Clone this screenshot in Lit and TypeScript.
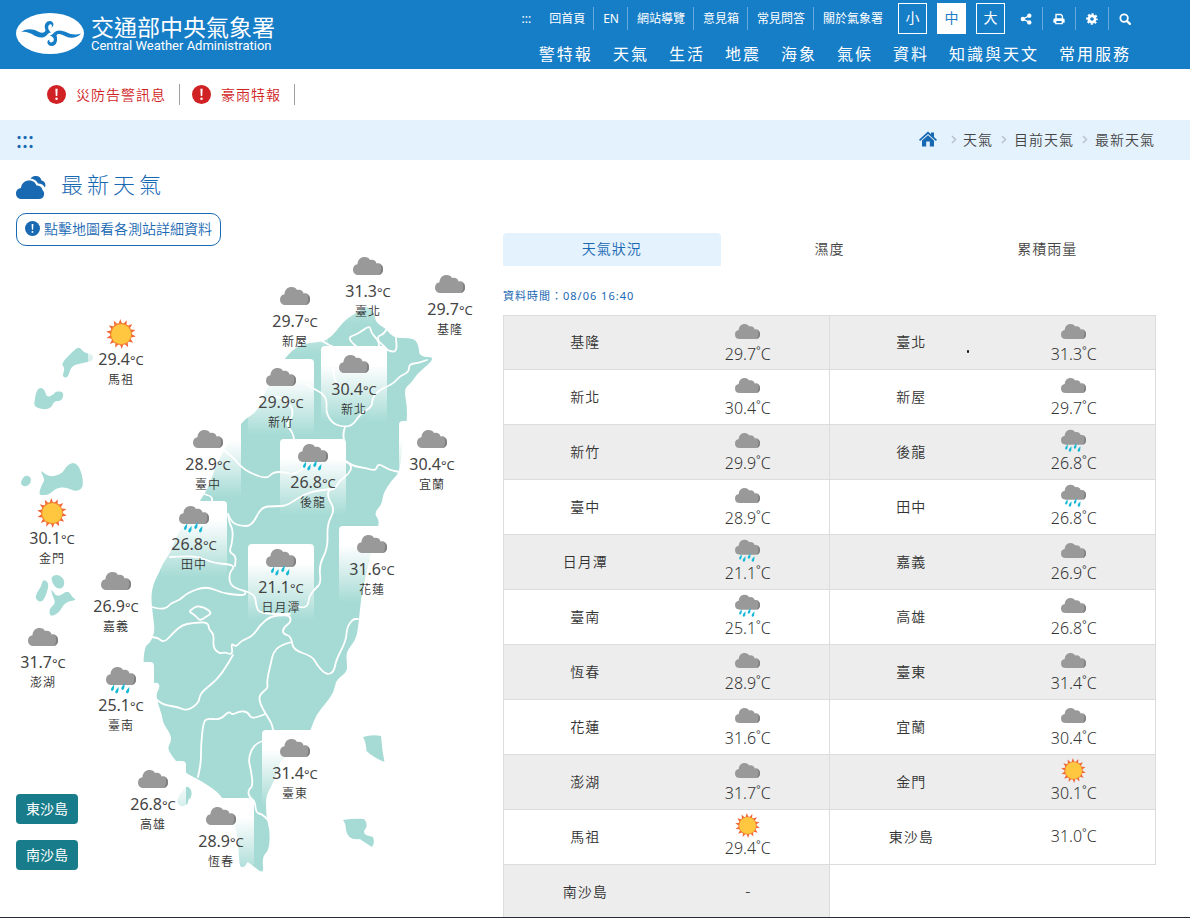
import { LitElement, html, css, svg } from "lit";
import { customElement, property, state } from "lit/decorators.js";
import { classMap } from "lit/directives/class-map.js";

type Sky = "cloud" | "rain" | "sun" | "";
type Pt = [number, number];

interface Station {
  name: string;
  temp: string;
  sky: Sky;
  x?: number;
  y?: number;
}

const stations: Station[] = [
  { name: "基隆", temp: "29.7", sky: "cloud", x: 450, y: 266 },
  { name: "臺北", temp: "31.3", sky: "cloud", x: 368, y: 248 },
  { name: "新北", temp: "30.4", sky: "cloud", x: 354, y: 346 },
  { name: "新屋", temp: "29.7", sky: "cloud", x: 295, y: 278 },
  { name: "新竹", temp: "29.9", sky: "cloud", x: 281, y: 359 },
  { name: "後龍", temp: "26.8", sky: "rain", x: 313, y: 439 },
  { name: "臺中", temp: "28.9", sky: "cloud", x: 208, y: 421 },
  { name: "田中", temp: "26.8", sky: "rain", x: 194, y: 501 },
  { name: "日月潭", temp: "21.1", sky: "rain", x: 281, y: 544 },
  { name: "嘉義", temp: "26.9", sky: "cloud", x: 116, y: 563 },
  { name: "臺南", temp: "25.1", sky: "rain", x: 121, y: 662 },
  { name: "高雄", temp: "26.8", sky: "cloud", x: 153, y: 761 },
  { name: "恆春", temp: "28.9", sky: "cloud", x: 221, y: 798 },
  { name: "臺東", temp: "31.4", sky: "cloud", x: 295, y: 730 },
  { name: "花蓮", temp: "31.6", sky: "cloud", x: 372, y: 526 },
  { name: "宜蘭", temp: "30.4", sky: "cloud", x: 432, y: 421 },
  { name: "澎湖", temp: "31.7", sky: "cloud", x: 43, y: 619 },
  { name: "金門", temp: "30.1", sky: "sun", x: 52, y: 495 },
  { name: "馬祖", temp: "29.4", sky: "sun", x: 121, y: 316 },
  { name: "東沙島", temp: "31.0", sky: "" },
  { name: "南沙島", temp: "", sky: "" },
];

/* Map canvas: origin and size of the drawing's coordinate system */
const MAP = { x: 16, y: 246, w: 471, h: 640 };

const parse = (s: string): Pt[] =>
  s.trim().split(/\s+/).map((p) => p.split(",").map(Number) as Pt);

/* Closed shape with rounded corners, through the midpoints of its edges */
const blob = (s: string): string => {
  const p = parse(s);
  const mid = (a: Pt, b: Pt) => `${(a[0] + b[0]) / 2},${(a[1] + b[1]) / 2}`;
  let d = `M${mid(p[p.length - 1], p[0])}`;
  p.forEach((q, i) => {
    d += `Q${q[0]},${q[1]} ${mid(q, p[(i + 1) % p.length])}`;
  });
  return d + "Z";
};

/* Open line, softened in the same way */
const line = (s: string): string => {
  const p = parse(s);
  let d = `M${p[0].join(",")}`;
  for (let i = 1; i < p.length - 1; i++) {
    d += `Q${p[i].join(",")} ${(p[i][0] + p[i + 1][0]) / 2},${(p[i][1] + p[i + 1][1]) / 2}`;
  }
  return d + `L${p[p.length - 1].join(",")}`;
};

const land = [
  "360,310 368,306 374,312 376,323 385,328 390,334 396,338 409,338 416,340 419,348 419,354 424,357 433,357 431,362 417,374 412,382 405,388 405,396 407,406 407,424 403,440 401,460 399,473 391,481 383,494 382,504 374,513 379,520 378,528 372,548 366,575 361,598 358,630 355,641 346,652 347,664 347,672 336,680 334,692 326,703 316,715 311,729 304,745 290,754 279,762 275,780 266,795 266,810 267,820 270,832 269,850 262,857 264,874 254,867 247,861 246,866 240,868 239,858 238,840 235,824 226,806 222,797 215,790 198,779 185,773 176,761 167,749 171,742 171,735 163,723 162,715 158,704 156,694 160,687 158,682 150,684 146,672 143,664 145,646 150,643 155,632 153,616 151,598 153,584 159,573 163,563 171,552 176,536 187,520 200,501 208,488 216,466 224,450 236,430 246,418 257,412 266,390 284,358 300,344 320,342 326,340 333,335 345,320 353,315",
  "61,364 70,354 79,346 84,353 93,354 93,361 82,363 71,366 68,378 62,377 65,368",
  "34,403 37,388 44,388 47,398 54,394 56,391 64,392 62,401 54,401 52,407 45,410 35,407",
  "21,481 25,475 31,477 31,483 26,487 21,485",
  "40,470 44,473 50,477 62,474 67,465 75,462 81,470 84,487 76,492 66,487 56,488 49,495 38,496 42,484 45,480",
  "50,577 58,574 65,580 63,589 55,588",
  "43,579 49,583 47,593 42,603 35,599 37,592 41,587",
  "51,588 57,598 68,590 72,597 77,600 65,602 59,613 50,617 49,609 56,603 52,595",
  "186,785 192,790 191,799 185,807 178,805 177,799",
];

const borders = [
  "356,346 346,338 358,334 370,325 371,333 379,341 379,349",
  "386,330 384,334 378,336 378,341 384,346 388,351 397,352 396,338",
  "427,360 419,363 409,364 409,372 400,376 394,383 386,387 378,391 372,399 372,407 361,413 353,425 345,427 333,424 326,413 327,400 322,393 314,389 306,384",
  "345,427 343,433 344,440",
  "262,402 274,394 288,402 293,410 292,418 286,424 293,433 294,440",
  "322,341 329,345 332,346",
  "333,369 334,380 340,386",
  "225,451 233,457 240,466 250,473 267,479 273,472 285,472 294,475 306,466",
  "346,461 352,466 366,468 376,471 378,463 389,470 400,472",
  "335,459 346,461 352,466 349,474 340,480 335,489 328,490 328,498 335,510 327,524 328,548 319,565 321,583 316,588 309,596 308,606 301,608 292,604",
  "204,494 212,496 212,501",
  "228,514 231,522 240,526 252,526 261,507 275,506 286,506 298,498 310,492 330,489",
  "228,514 229,522 233,530 232,544 229,552 236,556 235,566",
  "170,557 184,556 200,557 213,563 236,565 229,573 230,585 240,590 246,591 245,595 238,595 222,593 206,586 187,593 180,600 171,603 167,608 160,609 152,607",
  "245,591 255,594 256,605 259,613 276,614 290,614",
  "190,611 195,606 204,607 212,613 207,616 200,621 196,616 190,612",
  "150,637 157,637 164,643 173,633 182,625 192,623 208,622 209,630 214,634 213,648 220,654 224,652 233,655 231,643 236,647 241,641 253,636 260,625 271,616 285,615 290,616 291,622 283,628 283,634 291,636 293,650 312,656 317,665 326,675 334,672 336,660 346,641 347,627 353,619 358,619",
  "233,655 228,664 217,680 200,693 199,703 187,711 178,707 164,705 157,700",
  "292,642 280,645 273,653 271,663 268,675 267,684 268,688 259,695 260,704 267,716 272,724 273,730",
  "265,714 252,720 248,712 240,711 232,715 229,711 220,720 206,718 203,725 201,745 201,762 198,777",
  "263,741 255,743 248,758 251,770 253,786 248,790 249,797 255,801 256,813 262,814 268,820",
];

const cloudPath =
  "M6 24 C2 24 0 22 0 18.500 C0 15.500 2 13.500 4.500 13.300 C4.500 8.500 8 6 11.500 6 C14.500 6 16 7.300 17 9 C20 8 23.300 9.700 23.500 12.500 C27.500 11.500 30 14.300 30 18 C30 22 28 24 24.500 24 Z";

/* Fourteen slim rays, each a triangle on the rim of the disc */
const sunRays = (() => {
  const pts: string[] = [];
  const at = (r: number, a: number) => pts.push(`${(15 + r * Math.cos(a)).toFixed(2)},${(15 + r * Math.sin(a)).toFixed(2)}`);
  for (let i = 0; i < 14; i++) {
    const a = (i / 14) * Math.PI * 2 - Math.PI / 2 - 0.05;
    at(10.6, a - 0.17);
    at(15, a);
    at(10.6, a + 0.15);
  }
  return pts.join(" ");
})();

@customElement("sky-icon")
export class SkyIcon extends LitElement {
  @property() kind: Sky = "cloud";

  static styles = css`
    :host { display: block; }
    svg { display: block; width: 100%; height: 100%; }
  `;

  render() {
    if (this.kind === "sun") {
      return html`<svg viewBox="0 0 30 30" role="img" aria-label="晴">
        <polygon points=${sunRays} fill="#ef6537"></polygon>
        <circle cx="15" cy="15" r="10.900" fill="#f58a30"></circle>
        <circle cx="15.200" cy="15.200" r="10" fill="#ffc640"></circle>
        <path d="M6 14 A9.500 9.500 0 0 1 19 6.500 A10 10 0 0 0 6 14Z" fill="#ffd97a"></path>
      </svg>`;
    }
    const rain = this.kind === "rain";
    return html`<svg viewBox="0 0 30 30" role="img" aria-label=${rain ? "雨" : "陰"}>
      <g transform=${rain ? "translate(0 -4)" : "translate(0 0)"}>
        <path d=${cloudPath} fill="#999"></path>
        <path d="M27.500 13.800 C29.200 14.600 30 16 30 18.300 C30 21.500 28.500 23.500 26 23.900 C28 22 28.900 17.500 27.500 13.800Z" fill="#7f7f7f"></path>
        ${rain
          ? svg`<g fill="#16b8d6">
              <path d="M8.200 23.500 L7.900 27.500 C7.500 30.500 5 30.500 5 28.500 C5 26.500 6.800 25.500 8.200 23.500Z"></path>
              <path d="M12.700 26 L12.400 30 C12 33 9.300 33 9.300 31 C9.300 29 11.200 28 12.700 26Z"></path>
              <path d="M18.700 22 L18.400 26.500 C18 29.500 15.300 29.500 15.300 27.500 C15.300 25.500 17.200 24.500 18.700 22Z"></path>
              <path d="M23.400 26 L23.100 30 C22.700 33 20 33 20 31 C20 29 21.900 28 23.400 26Z"></path>
            </g>`
          : ""}
      </g>
    </svg>`;
  }
}

@customElement("taiwan-map")
export class TaiwanMap extends LitElement {
  static styles = css`
    :host { display: block; position: relative; height: 640px; }
    .land { display: block; position: absolute; left: 0; top: 0; width: 471px; height: 640px; overflow: visible; }
    .pin {
      position: absolute; width: 66px; height: 76px; padding: 3px 0 0; margin: 0; border: 0;
      border-radius: 4px; font: inherit; font-weight: 400; color: #444; cursor: pointer;
      background: linear-gradient(#fff 0, #fff 25%, rgba(255, 255, 255, 0) 100%);
      display: flex; flex-direction: column; align-items: center; white-space: nowrap;
    }
    .pin sky-icon { width: 30px; height: 30px; flex: none; }
    .temp { font-size: 16px; line-height: 20px; }
    .unit { font-size: 13px; }
    .name { font-size: 12px; line-height: 20px; letter-spacing: 1px; font-weight: 350; color: #333; }
    .isles { position: absolute; left: 0; bottom: 16px; display: grid; gap: 16px; }
    .isle {
      width: 62px; height: 30px; padding: 0; border: 0; border-radius: 4px; background: #187c8b; color: #fff;
      font: inherit; font-weight: 400; font-size: 14px; line-height: 30px;
    }
  `;

  render() {
    return html`
      <svg class="land" viewBox="${MAP.x} ${MAP.y} ${MAP.w} ${MAP.h}" aria-hidden="true">
        <g fill="#a6dbd5">
          ${land.map((s) => svg`<path d=${blob(s)}></path>`)}
          <path d="M363 737 Q372 734 381 736 Q382 750 384.500 762 Q374 758 366.500 751 Q366 742 363 737Z"></path>
          <path d="M343 820 Q354 818 364 819 Q368 823 366 828 Q362 832 366 835 L373 837 Q375 843 372 847 Q364 842 360 839 Q348 841 346 830 Q346 824 343 820Z"></path>
        </g>
        <g fill="none" stroke="#fff" stroke-width="1.800" stroke-linecap="round" stroke-linejoin="round">
          ${borders.map((s) => svg`<path d=${line(s)}></path>`)}
        </g>
      </svg>
      ${stations
        .filter((s) => s.x !== undefined)
        .map(
          (s) => html`<button class="pin" style="left:${s.x! - 33 - MAP.x}px;top:${s.y! - MAP.y}px">
            <sky-icon kind=${s.sky}></sky-icon>
            <span class="temp">${s.temp}<span class="unit">°C</span></span>
            <span class="name">${s.name}</span>
          </button>`,
        )}
      <div class="isles">
        <button class="isle">東沙島</button>
        <button class="isle">南沙島</button>
      </div>
    `;
  }
}

const alertIcon = (cls: string) => html`<svg class=${cls} viewBox="0 0 20 20" aria-hidden="true">
  <circle cx="10" cy="10" r="10" fill="currentColor"></circle>
  <path d="M8.800 4 H11.200 L10.800 11.500 H9.200Z" fill="#fff"></path>
  <circle cx="10" cy="14.500" r="1.300" fill="#fff"></circle>
</svg>`;

const toolIcons = [
  {
    label: "分享",
    art: svg`<path d="M4 8 L12.500 3.500 M4 8 L12.500 12.500" stroke="#fff" stroke-width="1.800"></path><circle cx="3.800" cy="8" r="3" fill="#fff"></circle><circle cx="12.400" cy="3.500" r="2.900" fill="#fff"></circle><circle cx="12.400" cy="12.500" r="2.900" fill="#fff"></circle>`,
  },
  {
    label: "列印",
    art: svg`<path d="M4 7.500 V2 H10.500 L12.500 4 V7.500" fill="none" stroke="#fff" stroke-width="1.800"></path><path fill-rule="evenodd" d="M2.500 7 H13.500 Q15.500 7 15.500 9 V13 H13.200 V15 H2.800 V13 H.5 V9 Q.5 7 2.500 7Z M4.500 10.800 V13.400 H11.500 V10.800Z" fill="#fff"></path>`,
  },
  {
    label: "設定",
    art: svg`<circle cx="8" cy="8" r="4.200" fill="none" stroke="#fff" stroke-width="3.600"></circle><circle cx="8" cy="8" r="6.600" fill="none" stroke="#fff" stroke-width="2.400" stroke-dasharray="2.800 2.384" stroke-dashoffset="1.400"></circle>`,
  },
  {
    label: "搜尋",
    art: svg`<circle cx="6.800" cy="6.800" r="5" fill="none" stroke="#fff" stroke-width="2.400"></circle><path d="M10.500 10.500 L14.500 14.500" stroke="#fff" stroke-width="3" stroke-linecap="round"></path>`,
  },
];

@customElement("app-root")
export class AppRoot extends LitElement {
  @state() private size = "中";
  @state() private tab = "天氣狀況";

  static styles = css`
    :host {
      display: flex; flex-direction: column; box-sizing: border-box; height: 100vh; overflow: hidden;
      background: #fff; color: #333; border-bottom: 1px solid #262c38;
      font-family: "Noto Sans", "Noto Sans CJK TC", sans-serif; font-size: 14px; font-weight: 350;
    }
    * { box-sizing: border-box; }
    a { color: inherit; text-decoration: none; }
    button { font-family: inherit; font-weight: inherit; cursor: pointer; }
    header {
      flex: none; height: 69px; padding: 0 59px 0 16px; background: #167dc7; color: #fff;
      display: flex; justify-content: space-between;
    }
    .brand { display: flex; align-items: center; gap: 7px; height: 67px; }
    .mark { width: 68px; height: 42px; flex: none; }
    .brand-text { display: grid; white-space: nowrap; font-family: "Noto Sans CJK TC", sans-serif; }
    .brand-zh { font-size: 23px; line-height: 24px; font-weight: 400; }
    .brand-en { font-size: 13px; line-height: 16px; font-family: Roboto, sans-serif; font-weight: 400; }
    .menus { display: flex; flex-direction: column; align-items: flex-end; white-space: nowrap; }
    .top { display: flex; align-items: center; height: 31px; margin-top: 3px; font-size: 12px; font-weight: 400; }
    .top .link { height: 23px; line-height: 23px; padding: 0 8px; border-left: 1px solid #64a8dc; }
    .top .link.plain { border-left: 0; }
    .top .link + .link { padding-left: 9px; }
    .skip { padding-right: 10px; }
    .sizes { display: flex; gap: 10px; margin: 0 15px 0 7px; }
    .size { width: 29px; height: 31px; padding: 0 0 2px; border: 1px solid #fff; background: none; color: #fff; font-size: 14px; line-height: 27px; }
    .size.on { background: #fff; color: #167dc7; }
    .tools { display: flex; align-items: center; }
    .tool { height: 23px; padding: 0 10px; border: 0; border-left: 1px solid #64a8dc; background: none; display: flex; align-items: center; }
    .tool:first-child { border-left: 0; padding-left: 0; }
    .tool:last-child { padding-right: 0; }
    .tool svg { width: 12px; height: 12px; display: block; }
    .nav { display: flex; gap: 20px; font-size: 16px; letter-spacing: 2px; line-height: 24px; margin-top: 8px; font-weight: 400; }
    .alerts { flex: none; height: 51px; padding-left: 35px; display: flex; align-items: center; color: #d02224; letter-spacing: 1px; }
    .alert { display: flex; align-items: center; height: 21px; line-height: 20px; padding: 0 13px 0 12px; border-right: 1px solid #a0a0a0; }
    .alert-icon { width: 19px; height: 19px; margin-right: 10px; }
    .crumbs {
      flex: none; height: 40px; padding: 0 35px 2px 16px; background: #e4f2fe; color: #444;
      display: flex; align-items: center; justify-content: space-between; letter-spacing: 1px;
    }
    .marker { color: #1868b2; font-size: 22px; font-weight: 500; line-height: 30px; letter-spacing: 0; }
    .trail { display: flex; align-items: center; }
    .home { display: block; width: 18px; height: 18px; margin-right: 14px; color: #1868b2; }
    .sep { width: 6px; height: 9px; margin: 0 7px 0 8px; }
    .sep.first { margin: 0 6px 0 0; }
    .title { flex: none; display: flex; align-items: center; gap: 15px; height: 53px; padding: 0 16px; color: #1868b2; }
    .title svg { width: 30px; height: 24px; }
    h1 { margin: 0; padding-bottom: 5px; font-size: 22px; line-height: 30px; font-weight: 300; letter-spacing: 4px; }
    main { display: grid; grid-template-columns: 487fr 653fr; padding: 0 34px 0 16px; }
    .hint {
      display: inline-flex; align-items: center; gap: 4px; height: 33px; padding: 0 8px 3px; border: 1px solid #1868b2;
      border-radius: 10px; background: #fff; color: #1868b2; font-size: 14px;
    }
    .hint-icon { width: 15px; height: 15px; }
    .panel { padding-top: 20px; }
    .tabs { display: grid; grid-template-columns: repeat(3, 1fr); }
    .tab { height: 33px; padding: 0 0 3px; border: 0; background: none; color: #444; border-radius: 4px 4px 0 0; font-size: 14px; letter-spacing: 1px; }
    .tab.on { background: #e4f2fe; color: #1868b2; }
    .time { margin: 20px 0 9px; font-size: 11px; line-height: 20px; color: #1868b2; letter-spacing: 1px; font-weight: 400; }
    table { width: 100%; border-collapse: collapse; table-layout: fixed; }
    tr { height: 55px; }
    tr:first-child { height: 54px; }
    tr.shade th, tr.shade td { background: #ededed; }
    tr.shade td.empty { background: none; border: 0; border-top: 1px solid #dcdcdc; }
    th, td { padding: 0 0 3px; font-weight: inherit; text-align: center; border: 1px solid #dcdcdc; }
    th { border-right: 0; font-size: 14px; letter-spacing: 1px; }
    td { border-left: 0; font-size: 16px; line-height: 20px; }
    td sky-icon { width: 25px; height: 25px; margin: 0 auto; }
    .spot { position: relative; }
    .spot::after { content: ""; position: absolute; right: 24px; top: 50%; width: 2px; height: 3px; border-radius: 1px; margin-top: 7px; background: #111; }
  `;

  private cells(s: Station) {
    return html`<th scope="row" class=${classMap({ spot: s.name === "臺北" })}>${s.name}</th>
      <td>
        ${s.sky ? html`<sky-icon kind=${s.sky}></sky-icon>` : ""}
        <div>${s.temp ? `${s.temp}˚C` : "-"}</div>
      </td>`;
  }

  render() {
    const order = ["基隆", "臺北", "新北", "新屋", "新竹", "後龍", "臺中", "田中", "日月潭", "嘉義", "臺南", "高雄",
      "恆春", "臺東", "花蓮", "宜蘭", "澎湖", "金門", "馬祖", "東沙島", "南沙島"];
    const list = order.map((n) => stations.find((s) => s.name === n)!);
    const rows: Station[][] = [];
    for (let i = 0; i < list.length; i += 2) rows.push(list.slice(i, i + 2));
    const sep = (first: boolean) => html`<svg class=${classMap({ sep: true, first })} viewBox="0 0 6 9" aria-hidden="true">
      <path d="M1 1 L4.500 4.500 L1 8" fill="none" stroke="#b9c4cd" stroke-width="1.500"></path></svg>`;

    return html`
      <header>
        <a class="brand" href="#">
          <svg class="mark" viewBox="0 0 68 42" aria-hidden="true">
            <ellipse cx="34" cy="20.500" rx="34" ry="20.500" fill="#fff"></ellipse>
            <g fill="#167dc7">
              <path d="M5 19 C11 15 17 16 22 18.500 C26 20.500 29 20 29.500 17 C27 11 31 7.500 34.500 8 C38 8.800 38.500 13 35.500 14.500 C37 11.500 34.500 10.500 33 12 C31.500 14 32 17 35 19.500 C31 19.500 31.500 24 26 24.500 C18 25 15 17.500 5 19Z"></path>
              <path d="M65 20.500 C61 25 55 26 50 23.500 C45 21 42 20 40.500 22.500 C42 27 40.500 32.500 36.500 33 C31.500 33.500 29.500 28 33.500 26.500 C32.500 29.500 36 30.500 37.500 28 C38.500 26 37.500 23.500 33.500 22.500 C38 22 37.500 17.500 43.500 17.500 C51 17.500 54 24 65 20.500Z"></path>
            </g>
          </svg>
          <span class="brand-text">
            <span class="brand-zh">交通部中央氣象署</span>
            <span class="brand-en">Central Weather Administration</span>
          </span>
        </a>
        <div class="menus">
          <div class="top">
            <a class="skip" href="#main">:::</a>
            <a class="link plain" href="#">回首頁</a>
            ${["EN", "網站導覽", "意見箱", "常見問答", "關於氣象署"].map((t) => html`<a class="link" href="#">${t}</a>`)}
            <div class="sizes">
              ${["小", "中", "大"].map(
                (t) => html`<button class=${classMap({ size: true, on: this.size === t })} @click=${() => (this.size = t)}>${t}</button>`,
              )}
            </div>
            <div class="tools">
              ${toolIcons.map((t) => html`<button class="tool" aria-label=${t.label}><svg viewBox="0 0 16 16">${t.art}</svg></button>`)}
            </div>
          </div>
          <nav class="nav">
            ${["警特報", "天氣", "生活", "地震", "海象", "氣候", "資料", "知識與天文", "常用服務"].map(
              (t) => html`<a href="#">${t}</a>`,
            )}
          </nav>
        </div>
      </header>
      <div class="alerts">
        ${["災防告警訊息", "豪雨特報"].map((t) => html`<a class="alert" href="#">${alertIcon("alert-icon")}${t}</a>`)}
      </div>
      <div class="crumbs">
        <a class="marker" href="#main">:::</a>
        <nav class="trail">
          <a href="#" aria-label="首頁">
            <svg class="home" viewBox="0 0 18 18">
              <path d="M9 1.500 L12 4.200 V2.500 H15 V7 L18 9.800 L16.900 11 L9 4 L1.100 11 L0 9.800Z" fill="currentColor"></path>
              <path d="M3 10.500 L9 5.300 L15 10.500 V16.500 H10.800 V11.500 H7.200 V16.500 H3Z" fill="currentColor"></path>
            </svg>
          </a>
          ${["天氣", "目前天氣", "最新天氣"].map((t, i) => html`${sep(i === 0)}<a href="#">${t}</a>`)}
        </nav>
      </div>
      <div class="title">
        <svg viewBox="0 0 30 24" fill="currentColor" aria-hidden="true">
          <path d="M5.500 24 C2 24 0 21.500 0 18.500 C0 15 2.500 13.200 5 13 C5.500 8 9 5.500 13.500 5.500 C17.500 5.500 19.500 8 20.500 10.500 C24 10.500 26 12.500 26.500 15 C28 16.500 28.300 18 28 20 C27.500 23 25 24 23 24Z"></path>
          <path d="M14.500 3.500 C16 1.500 18 1 20 1 C23 1 25 3 25.500 5.500 C28.500 6 30.500 9 28.800 12.500 C27.500 10 25.500 8.600 22 8.500 C20 5 18 4 14.500 3.500Z"></path>
        </svg>
        <h1>最新天氣</h1>
      </div>
      <main id="main">
        <section>
          <div class="hint">${alertIcon("hint-icon")}點擊地圖看各測站詳細資料</div>
          <taiwan-map></taiwan-map>
        </section>
        <section class="panel">
          <div class="tabs" role="tablist">
            ${["天氣狀況", "濕度", "累積雨量"].map(
              (t) => html`<button role="tab" aria-selected=${this.tab === t ? "true" : "false"}
                class=${classMap({ tab: true, on: this.tab === t })} @click=${() => (this.tab = t)}>${t}</button>`,
            )}
          </div>
          <p class="time">資料時間：08/06 16:40</p>
          <table>
            <tbody>
              ${rows.map(
                (r, i) => html`<tr class=${classMap({ shade: i % 2 === 0 })}>
                  ${r.map((s) => this.cells(s))}${r.length < 2 ? html`<td class="empty" colspan="2"></td>` : ""}
                </tr>`,
              )}
            </tbody>
          </table>
        </section>
      </main>
    `;
  }
}
